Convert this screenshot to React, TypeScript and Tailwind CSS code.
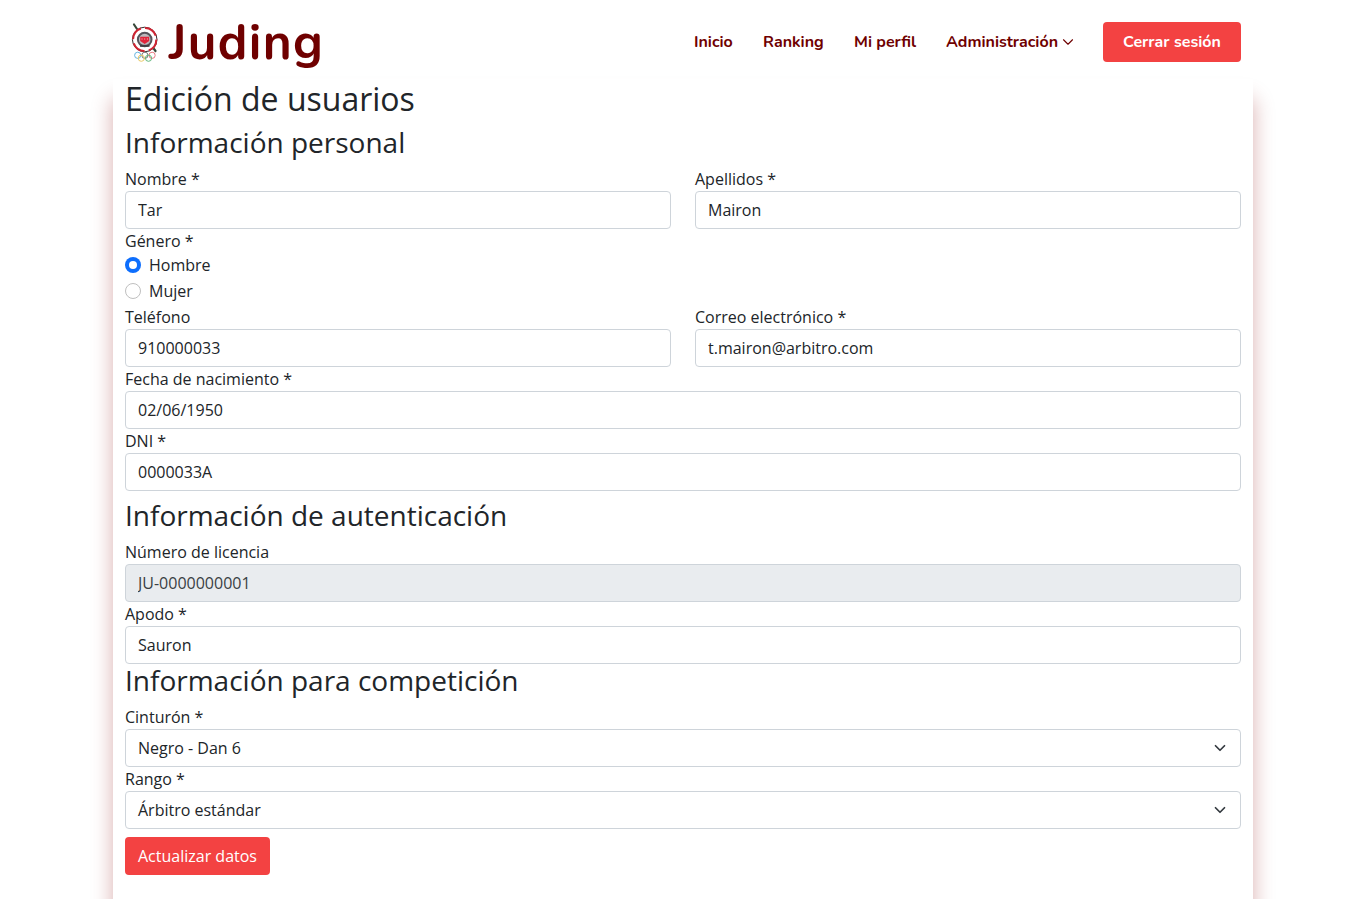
import React from 'react';

const inputBox =
  'h-[38px] w-full rounded-[4px] border border-[#ced4da] px-3 text-base leading-6 outline-none';

function Field({ label, value, disabled = false }: { label: string; value: string; disabled?: boolean }) {
  return (
    <label className="block flex-1">
      <span className="block h-6 leading-6">{label}</span>
      <input
        className={disabled ? `${inputBox} bg-[#e9ecef] text-[#3a3f44]` : `${inputBox} bg-white text-[#212529]`}
        defaultValue={value}
        disabled={disabled}
      />
    </label>
  );
}

function SelectField({ label, value }: { label: string; value: string }) {
  return (
    <div>
      <div className="h-6 leading-6">{label}</div>
      <div className="flex h-[38px] items-center justify-between rounded-[4px] border border-[#ced4da] bg-white px-3">
        <span>{value}</span>
        <svg className="h-3 w-4" viewBox="0 0 16 16" fill="none" stroke="#343a40" strokeWidth="2.300" strokeLinecap="round" strokeLinejoin="round">
          <path d="M2 5l6 6 6-6" />
        </svg>
      </div>
    </div>
  );
}

function Radio({ label, checked = false }: { label: string; checked?: boolean }) {
  return (
    <div className="flex h-[26px] gap-2">
      {checked ? (
        <span className="mt-1 flex h-4 w-4 items-center justify-center rounded-full bg-[#0d6efd]">
          <span className="h-2 w-2 rounded-full bg-white" />
        </span>
      ) : (
        <span className="mt-1 h-4 w-4 rounded-full border border-[#bfbfbf] bg-white" />
      )}
      <span className="leading-6">{label}</span>
    </div>
  );
}

function Emblem() {
  return (
    <svg className="h-[40px] w-[28px]" viewBox="0 0 28 40">
      <path d="M3 2.500 6 7M21.500 25l3 4" stroke="#38483a" strokeWidth="2.200" strokeLinecap="round" />
      <circle cx="13.700" cy="17.500" r="12.300" fill="#fff" stroke="#35282b" strokeWidth="1" />
      <circle cx="13.700" cy="17.500" r="11.600" fill="none" stroke="#cf2533" strokeWidth="2" strokeDasharray="14 4.200" />
      <path d="M7 10 13.700 7l6.500 3 3.600 7.500-3.600 7.500-6.500 3-6.700-3-3.400-7.500z" fill="#fff" />
      <circle cx="13.700" cy="17.500" r="6.800" fill="#bbb9bd" stroke="#55535a" strokeWidth="2" />
      <path d="M9.200 14.800h9v4.200l-4.500 3-4.500-3z" fill="#e0243a" />
      <path d="M10.500 17h1m1.700 0h1m1.700 0h1" stroke="#f5c4ca" strokeWidth="1" />
      <path d="M9 23.800h9.500" stroke="#403d42" strokeWidth="2" />
      <g fill="none" strokeWidth="1">
        <circle cx="6.700" cy="33.300" r="3.100" stroke="#68b5df" />
        <circle cx="13.900" cy="33.300" r="3.100" stroke="#77777a" />
        <circle cx="21.100" cy="33.300" r="3.100" stroke="#e77980" />
        <circle cx="10.300" cy="36.200" r="3.100" stroke="#e9c966" />
        <circle cx="17.500" cy="36.200" r="3.100" stroke="#60b77c" />
      </g>
    </svg>
  );
}

export default function App() {
  return (
    <div className="flex h-[899px] flex-col overflow-hidden bg-white font-['Open_Sans',sans-serif] text-base leading-6 text-[#212529]">
      <header className="z-10 mx-auto flex h-[84px] w-[1116px] shrink-0 items-center justify-between font-['Nunito','Lato',sans-serif] font-bold text-[#6f0000]">
        <div className="flex items-center gap-[10px] pl-[6px]">
          <Emblem />
          <span className="pt-[2px] text-[49.500px] leading-[60px] tracking-[1.300px]">Juding</span>
        </div>
        <nav className="flex items-center">
          <a className="w-[69px]">Inicio</a>
          <a className="w-[91px]">Ranking</a>
          <a className="w-[92px]">Mi perfil</a>
          <a className="flex w-[157px] items-center gap-[5px]">
            <span className="w-[111px]">Administración</span>
            <svg className="h-3 w-3" viewBox="0 0 16 16" fill="none" stroke="currentColor" strokeWidth="1.500" strokeLinecap="round" strokeLinejoin="round">
              <path d="M2 5l6 6 6-6" />
            </svg>
          </a>
          <button className="h-10 w-[138px] rounded-[4px] bg-[#f34242] text-white">Cerrar sesión</button>
        </nav>
      </header>

      <main className="mx-auto -mt-[5px] h-[900px] w-[1140px] shrink-0 bg-white px-3 pt-px shadow-[0_20px_20px_rgba(137,0,0,0.32)]">
        <h2 className="mb-2 h-[38.400px] text-[32px] leading-[38px]">Edición de usuarios</h2>
        <h3 className="mb-[7px] h-[33.600px] text-[28px] leading-[33.600px]">Información personal</h3>
        <div className="flex gap-6">
          <Field label="Nombre *" value="Tar" />
          <Field label="Apellidos *" value="Mairon" />
        </div>
        <div className="h-6">Género *</div>
        <Radio label="Hombre" checked />
        <Radio label="Mujer" />
        <div className="flex gap-6">
          <Field label="Teléfono" value="910000033" />
          <Field label="Correo electrónico *" value="t.mairon@arbitro.com" />
        </div>
        <Field label="Fecha de nacimiento *" value="02/06/1950" />
        <Field label="DNI *" value="0000033A" />
        <h3 className="mt-2 mb-[7.400px] h-[33.600px] text-[28px] leading-[33.600px]">Información de autenticación</h3>
        <Field label="Número de licencia" value="JU-0000000001" disabled />
        <Field label="Apodo *" value="Sauron" />
        <h3 className="mb-[7.400px] h-[33.600px] text-[28px] leading-[33.600px]">Información para competición</h3>
        <SelectField label="Cinturón *" value="Negro - Dan 6" />
        <SelectField label="Rango *" value="Árbitro estándar" />
        <button className="mt-2 h-[38px] w-[145px] rounded-[4px] bg-[#f34242] text-white">Actualizar datos</button>
      </main>
    </div>
  );
}
